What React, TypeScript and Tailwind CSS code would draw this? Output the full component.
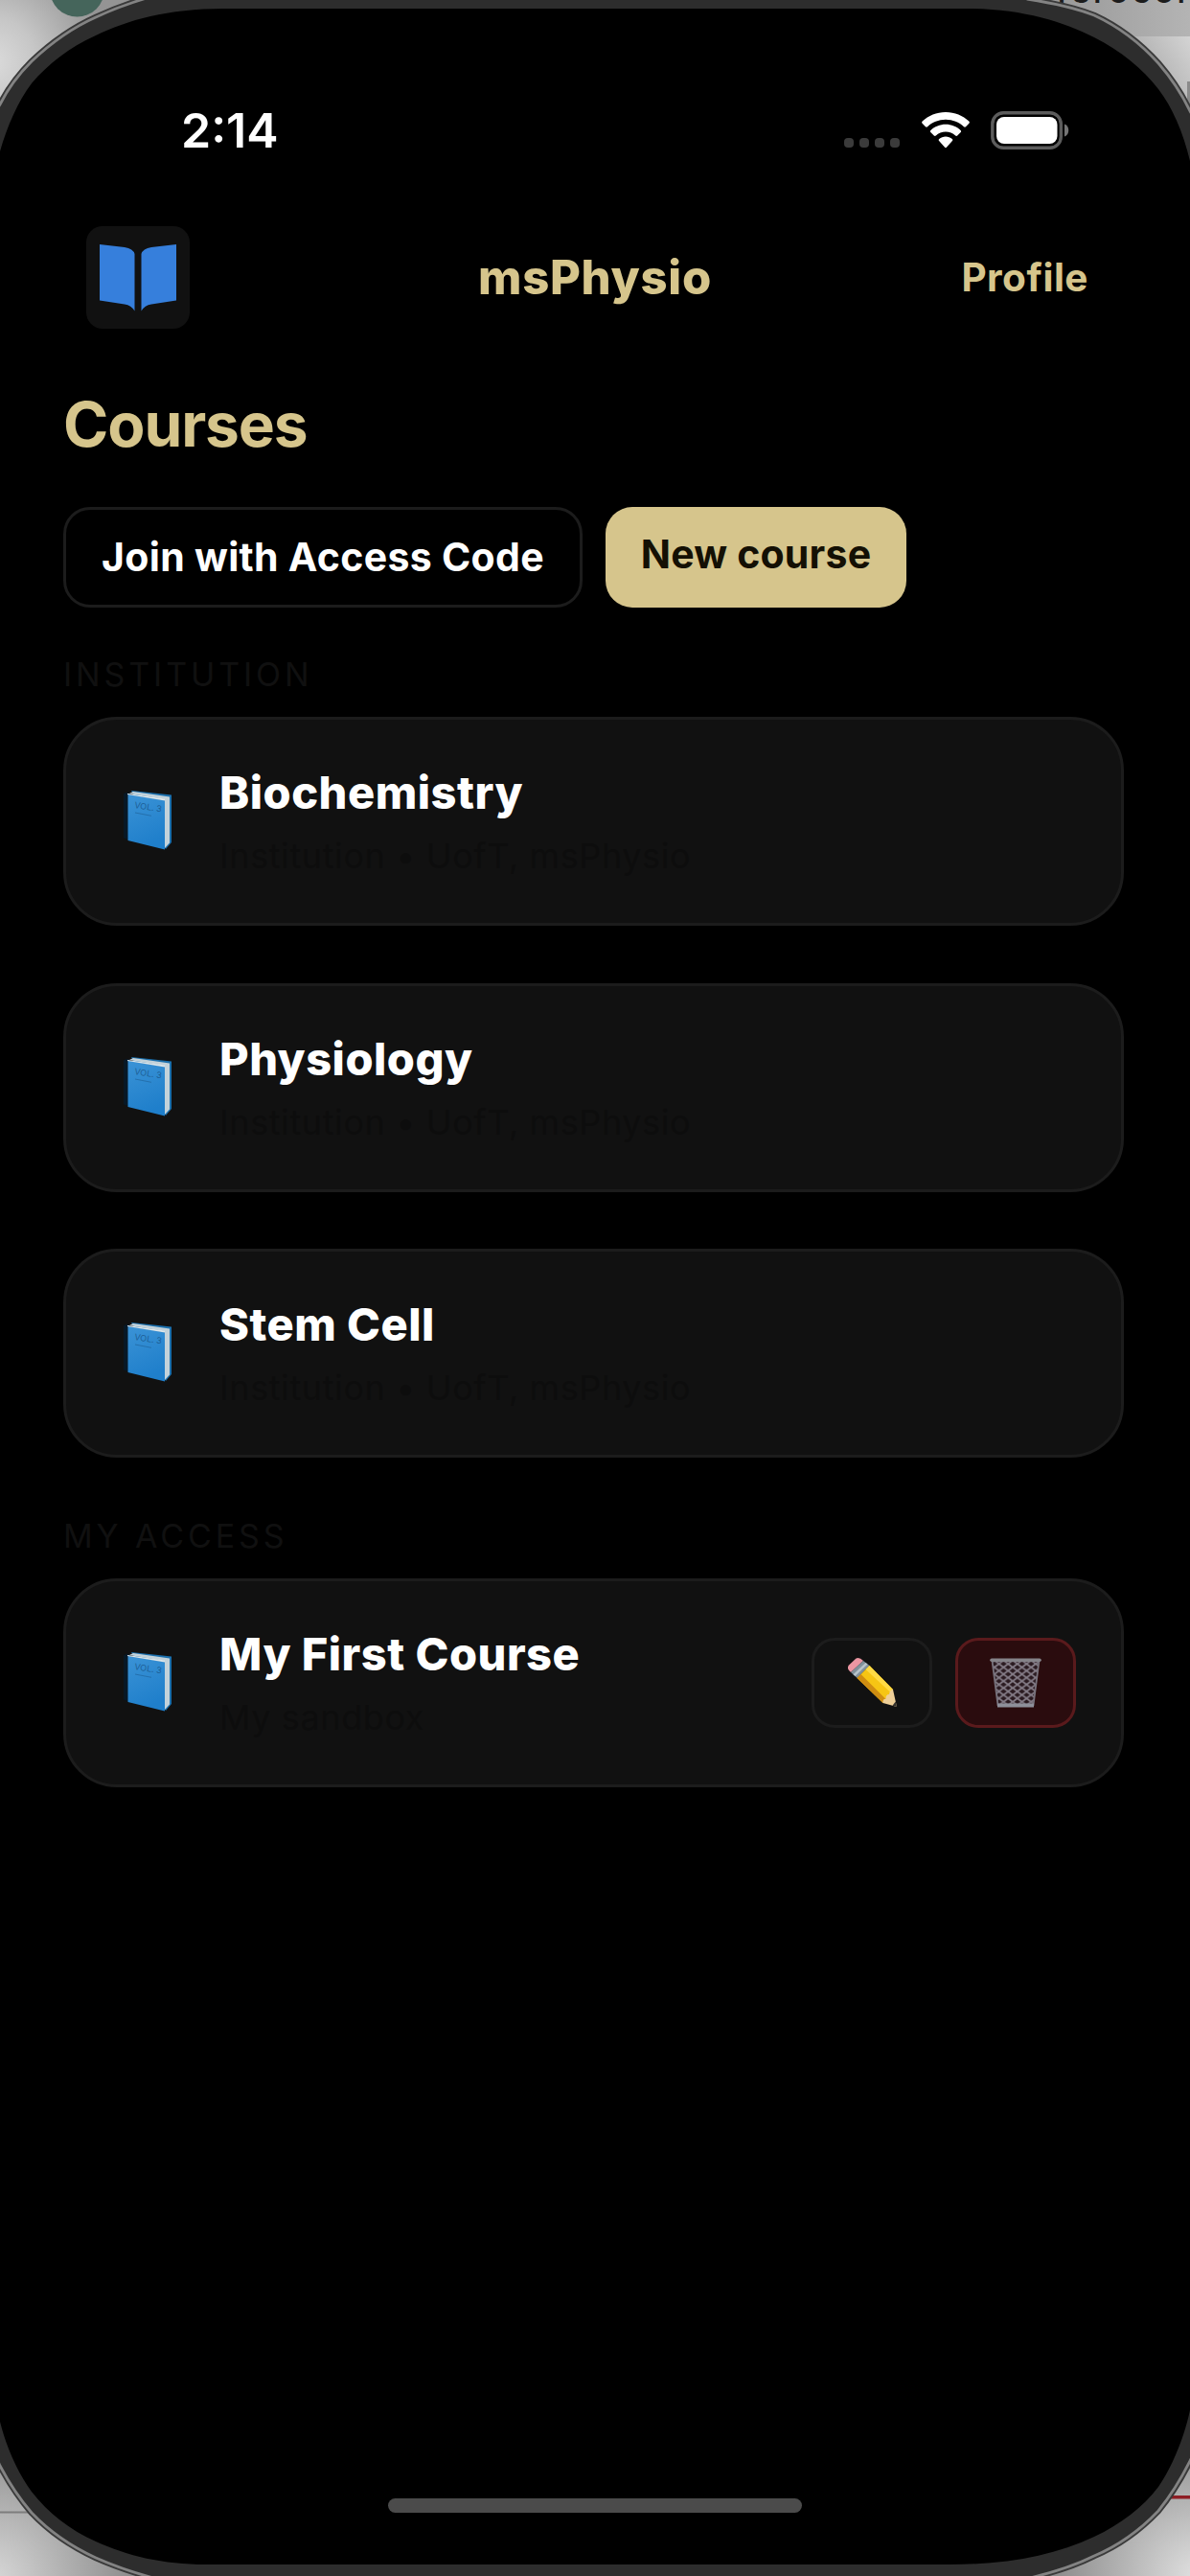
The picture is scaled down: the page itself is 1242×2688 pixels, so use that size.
interface Course {
  id: number;
  title: string;
  subtitle: string;
  editable?: boolean;
}

const institutionCourses: Course[] = [
  { id: 1, title: "Biochemistry", subtitle: "Institution • UofT, msPhysio" },
  { id: 2, title: "Physiology", subtitle: "Institution • UofT, msPhysio" },
  { id: 3, title: "Stem Cell", subtitle: "Institution • UofT, msPhysio" },
];

const myCourses: Course[] = [
  { id: 4, title: "My First Course", subtitle: "My sandbox", editable: true },
];

// phone bezel and the bit of desktop that shows behind its corners
function DeviceFrame() {
  const outer =
    "M-30 420 C-30 250 -22 145 0 109 C9 91 20 77 33 64 C52 46 73 30 100 18 C115 11 130 5 150 -1 L160 -5 H1060 L1072 -1 C1098 3 1122 8 1142 16 C1168 28 1190 45 1209 66 C1222 81 1234 99 1242 116 C1264 150 1272 250 1272 420 V2260 C1272 2430 1264 2525 1242 2568 C1233 2586 1222 2604 1209 2620 C1190 2640 1168 2656 1142 2667 C1122 2677 1100 2684 1075 2690 L1060 2694 H170 L160 2690 C138 2684 118 2677 100 2669 C74 2657 51 2641 33 2622 C20 2607 9 2590 0 2573 C-22 2525 -30 2430 -30 2260 Z";
  const inner =
    "M-18 420 C-18 280 -12 200 0 158 C7 133 19 105 33 87 C50 67 73 49 100 37 C133 21 175 9 233 9 H1009 C1065 9 1108 22 1142 39 C1170 53 1193 72 1209 93 C1223 111 1235 138 1242 168 C1255 215 1260 300 1260 420 V2260 C1260 2390 1254 2465 1242 2515 C1236 2543 1224 2573 1209 2595 C1193 2616 1170 2634 1142 2647 C1100 2667 1050 2676 990 2676 H215 C170 2676 133 2667 100 2652 C73 2640 50 2622 33 2600 C19 2581 7 2555 0 2527 C-12 2480 -18 2390 -18 2260 Z";
  return (
    <svg className="absolute inset-0" width="1242" height="2688" viewBox="0 0 1242 2688">
      <defs>
        <radialGradient id="tl" gradientUnits="userSpaceOnUse" cx="-10" cy="65" r="120">
          <stop offset="0" stopColor="#dcdcdc" />
          <stop offset="0.4" stopColor="#c6c6c6" />
          <stop offset="1" stopColor="#949494" />
        </radialGradient>
        <linearGradient id="tr" gradientUnits="userSpaceOnUse" x1="1185" y1="80" x2="1250" y2="38">
          <stop offset="0" stopColor="#a8a8a8" />
          <stop offset="1" stopColor="#d8d8d8" />
        </linearGradient>
        <linearGradient id="bar" x1="0" y1="0" x2="1" y2="0">
          <stop offset="0" stopColor="#858585" />
          <stop offset="1" stopColor="#b4b4b4" />
        </linearGradient>
        <radialGradient id="bl" gradientUnits="userSpaceOnUse" cx="-10" cy="2695" r="150">
          <stop offset="0" stopColor="#dadada" />
          <stop offset="1" stopColor="#8c8c8c" />
        </radialGradient>
        <radialGradient id="br" gradientUnits="userSpaceOnUse" cx="1252" cy="2690" r="150">
          <stop offset="0" stopColor="#e2e2e2" />
          <stop offset="1" stopColor="#8c8c8c" />
        </radialGradient>
      </defs>
      <rect width="300" height="300" fill="url(#tl)" />
      <circle cx="80.500" cy="-11" r="28.500" fill="#45655b" />
      <rect x="1000" width="242" height="38" fill="url(#bar)" />
      <rect x="1000" y="38" width="242" height="200" fill="url(#tr)" />
      <rect x="1239" y="85" width="3" height="26" fill="#8a8a8a" />
      <rect y="2400" width="300" height="288" fill="url(#bl)" />
      <rect y="2620.500" width="40" height="2" fill="#7d7d7d" />
      <rect x="942" y="2400" width="300" height="288" fill="url(#br)" />
      <rect x="1200" y="2604" width="42" height="3.500" fill="#8e1d24" />
      <text x="1102" y="3" fontSize="36" fontWeight="500" fill="#1c1c1c" letterSpacing="2.500" fontFamily="Inter, sans-serif">
        ferocor
      </text>
      <path d={outer} fill="none" stroke="#3a3a3a" strokeWidth="6.500" />
      <path d={outer} fill="#2d2d2d" stroke="#838383" strokeWidth="2.800" />
      <path d={inner} fill="#000" />
    </svg>
  );
}

function StatusBar() {
  return (
    <div className="mt-[112px] flex h-12 items-center pr-[126px] pl-[189px]">
      <span className="text-[50px] leading-[48px] font-semibold text-white">2:14</span>
      <div className="ml-auto flex items-center">
        <div className="mt-[26px] mr-[23px] flex gap-[6px]">
          <span className="size-[10px] rounded-[4px] bg-[#3b3b3b]" />
          <span className="size-[10px] rounded-[4px] bg-[#3b3b3b]" />
          <span className="size-[10px] rounded-[4px] bg-[#3b3b3b]" />
          <span className="size-[10px] rounded-[4px] bg-[#3b3b3b]" />
        </div>
        <svg className="mr-[22px]" width="50" height="38" viewBox="0 0 50 38" fill="#fff">
          <path d="M25 0C34.500 0 43 3.600 49.300 9.500C50 10.200 50 11 49.400 11.700L46 15.200C45.400 15.800 44.600 15.800 44 15.200C39 10.500 32.400 7.700 25 7.700S11 10.500 6 15.200C5.400 15.800 4.600 15.800 4 15.200L.6 11.700C0 11 0 10.200 .7 9.500C7 3.600 15.500 0 25 0Z" />
          <path d="M25 12.800C31 12.800 36.500 15.100 40.600 18.900C41.300 19.500 41.300 20.400 40.700 21L37.200 24.500C36.600 25.100 35.800 25.100 35.200 24.500C32.500 22 29 20.500 25 20.500S17.500 22 14.800 24.500C14.200 25.100 13.400 25.100 12.800 24.500L9.300 21C8.700 20.400 8.700 19.500 9.400 18.900C13.500 15.100 19 12.800 25 12.800Z" />
          <path d="M25 25.600C27.600 25.600 29.900 26.500 31.800 28C32.500 28.600 32.500 29.400 31.900 30L26.100 36.600C25.400 37.300 24.600 37.300 23.900 36.600L18.100 30C17.500 29.400 17.500 28.600 18.200 28C20.100 26.500 22.400 25.600 25 25.600Z" />
        </svg>
        <svg width="82" height="40" viewBox="0 0 82 40">
          <rect x="1.800" y="1.800" width="71.500" height="36.400" rx="11.500" fill="none" stroke="#5c5c5c" strokeWidth="3.400" />
          <rect x="6" y="6" width="63.500" height="28" rx="8" fill="#fff" />
          <path d="M77 13.500C82.700 15.500 82.700 24.500 77 26.500Z" fill="#757575" />
        </svg>
      </div>
    </div>
  );
}

function Header() {
  return (
    <header className="mt-[76px] grid h-[107px] grid-cols-[1fr_auto_1fr] items-center px-[106px]">
      <div className="-ml-4 flex h-[107px] w-[108px] items-center justify-center rounded-[17px] bg-[#111111]">
        <svg width="82" height="72" viewBox="0 0 82 72" fill="#367fdc">
          <path d="M1 1 27 4Q36 5.500 37.500 11V70.500Q34 64.500 27 63.500L1 59.500Z" />
          <path d="M81 1 55 4Q46 5.500 44.500 11V70.500Q48 64.500 55 63.500L81 59.500Z" />
        </svg>
      </div>
      <h1 className="text-[49px] leading-[60px] font-extrabold tracking-[0.7px] text-[#d6c58c]">msPhysio</h1>
      <span className="justify-self-end text-[40.500px] leading-[50px] font-bold tracking-[0.5px] text-[#d6c58c]">Profile</span>
    </header>
  );
}

function BookIcon() {
  return (
    <svg className="shrink-0" width="54" height="64" viewBox="0 0 54 64">
      <defs>
        <linearGradient id="cover" x1="0" y1="0" x2="0.300" y2="1">
          <stop offset="0" stopColor="#3b93d6" />
          <stop offset="1" stopColor="#1f7fcb" />
        </linearGradient>
      </defs>
      <path d="M10 0 52 4.500V54L46 61Z" fill="#1b6fac" />
      <path d="M8 3 12 1 50 6.500V54.500L45 60V9Z" fill="#c3d2da" />
      <path d="M2 3.500Q4 1 8 2.500V51.500L2 49.500Z" fill="#071826" />
      <path d="M6.500 3.500 45 10.500V61.500L6.500 52Z" fill="url(#cover)" />
      <path d="M6 3 45 8.500V10.500L6 4Z" fill="#dde6ea" />
      <text x="13" y="18" fontSize="9" fill="#1d5f97" transform="rotate(9 13 18)" fontFamily="Inter, sans-serif">
        VOL. 3
      </text>
      <path d="M14 23 31 26.300" stroke="#2470ad" strokeWidth="1" />
    </svg>
  );
}

function PencilIcon() {
  return (
    <svg width="54" height="54" viewBox="0 0 54 54">
      <path d="M3 8.500 10.500 1.500Q14 0 18 4L5 16Q0 12 3 8.500Z" fill="#ec96a2" />
      <path d="M18 4 24.500 9 11.500 22 5 16Z" fill="#82919b" />
      <path d="M20.500 6 22.500 7.500 9.500 20 7.500 18.300Z" fill="#b9c4ca" />
      <path d="M24.500 9 49 34 38.500 48 11.500 22Z" fill="#f6c514" />
      <path d="M11.500 22 15.500 18 42.500 45 38.500 48Z" fill="#cf8d12" />
      <path d="M20.500 13 24.500 9 49 34 47 37.500Z" fill="#ffda45" />
      <path d="M49 34 53 52 38.500 48Q38 44 41.500 43.500Q41.500 39 45 39Q45.500 34.500 49 34Z" fill="#efcf98" />
      <path d="M51.700 46.500 53 52 48.500 50.800Z" fill="#33302c" />
    </svg>
  );
}

function TrashIcon() {
  return (
    <svg width="54" height="54" viewBox="0 0 54 54" fill="none">
      <defs>
        <pattern id="mesh" width="9.600" height="7.200" patternUnits="userSpaceOnUse">
          <path d="M0 0 9.600 7.200M9.600 0 0 7.200" stroke="#857d88" strokeWidth="1.700" />
        </pattern>
      </defs>
      <path d="M2.500 4H51.500L45.500 50H8.500Z" fill="#2a1a20" />
      <path d="M2.500 4H51.500L45.500 50H8.500Z" fill="url(#mesh)" stroke="#77727c" strokeWidth="1.800" />
      <path d="M2 3.200H52" stroke="#858389" strokeWidth="3.500" strokeLinecap="round" />
      <path d="M8 50.500H46" stroke="#8e909a" strokeWidth="4" />
    </svg>
  );
}

function CourseCard({ course }: { course: Course }) {
  return (
    <div className="flex h-[218px] items-center rounded-[56px] border-[3px] border-[#1c1c1c] bg-[#111111] pr-[47px] pl-[58px]">
      <BookIcon />
      <div className="ml-[48px] flex flex-col gap-4">
        <h3 className="text-[47px] leading-[56px] font-extrabold tracking-[0.5px] whitespace-nowrap text-white">{course.title}</h3>
        <p className="text-[36px] leading-[44px] tracking-[0.6px] whitespace-nowrap text-[#0d0d0d]">{course.subtitle}</p>
      </div>
      {course.editable && (
        <div className="ml-auto flex gap-6">
          <button className="flex h-[94px] w-[126px] items-center justify-center rounded-[24px] border-[3px] border-[#1c1c1c]">
            <PencilIcon />
          </button>
          <button className="flex h-[94px] w-[126px] items-center justify-center rounded-[24px] border-[3px] border-[#5a1a1c] bg-[#2a0c0e]">
            <TrashIcon />
          </button>
        </div>
      )}
    </div>
  );
}

export default function App() {
  return (
    <div className="relative h-[2688px] w-[1242px] overflow-hidden bg-black font-['Inter','Liberation_Sans',sans-serif]">
      <DeviceFrame />
      <div className="relative flex h-full flex-col">
        <StatusBar />
        <Header />
        <main className="flex flex-col pr-[69px] pl-[66px]">
          <h2 className="mt-[60px] text-[64px] leading-[80px] font-bold tracking-[-1.1px] text-[#d6c58c]">Courses</h2>
          <div className="mt-[46px] flex gap-6">
            <button className="h-[105px] w-[542px] rounded-[28px] border-[3px] border-[#1c1c1c] text-[41px] font-bold tracking-[0.3px] whitespace-nowrap text-white">
              Join with Access Code
            </button>
            <button className="h-[105px] w-[314px] rounded-[28px] bg-[#d6c58c] pb-[6px] text-[41px] font-bold tracking-[0.2px] whitespace-nowrap text-[#141004]">
              New course
            </button>
          </div>
          <p className="mt-[50px] text-[34px] leading-[40px] tracking-[3.900px] text-[#101010]">INSTITUTION</p>
          <div className="mt-[24px] flex flex-col gap-[59.500px]">
            {institutionCourses.map(course => (
              <CourseCard key={course.id} course={course} />
            ))}
          </div>
          <p className="mt-[62px] text-[34px] leading-[40px] tracking-[3.900px] text-[#101010]">MY ACCESS</p>
          <div className="mt-[24px] flex flex-col">
            {myCourses.map(course => (
              <CourseCard key={course.id} course={course} />
            ))}
          </div>
        </main>
        <div className="mt-auto mb-[66px] h-[15px] w-[432px] self-center rounded-full bg-[#4b4b4b]" />
      </div>
    </div>
  );
}
